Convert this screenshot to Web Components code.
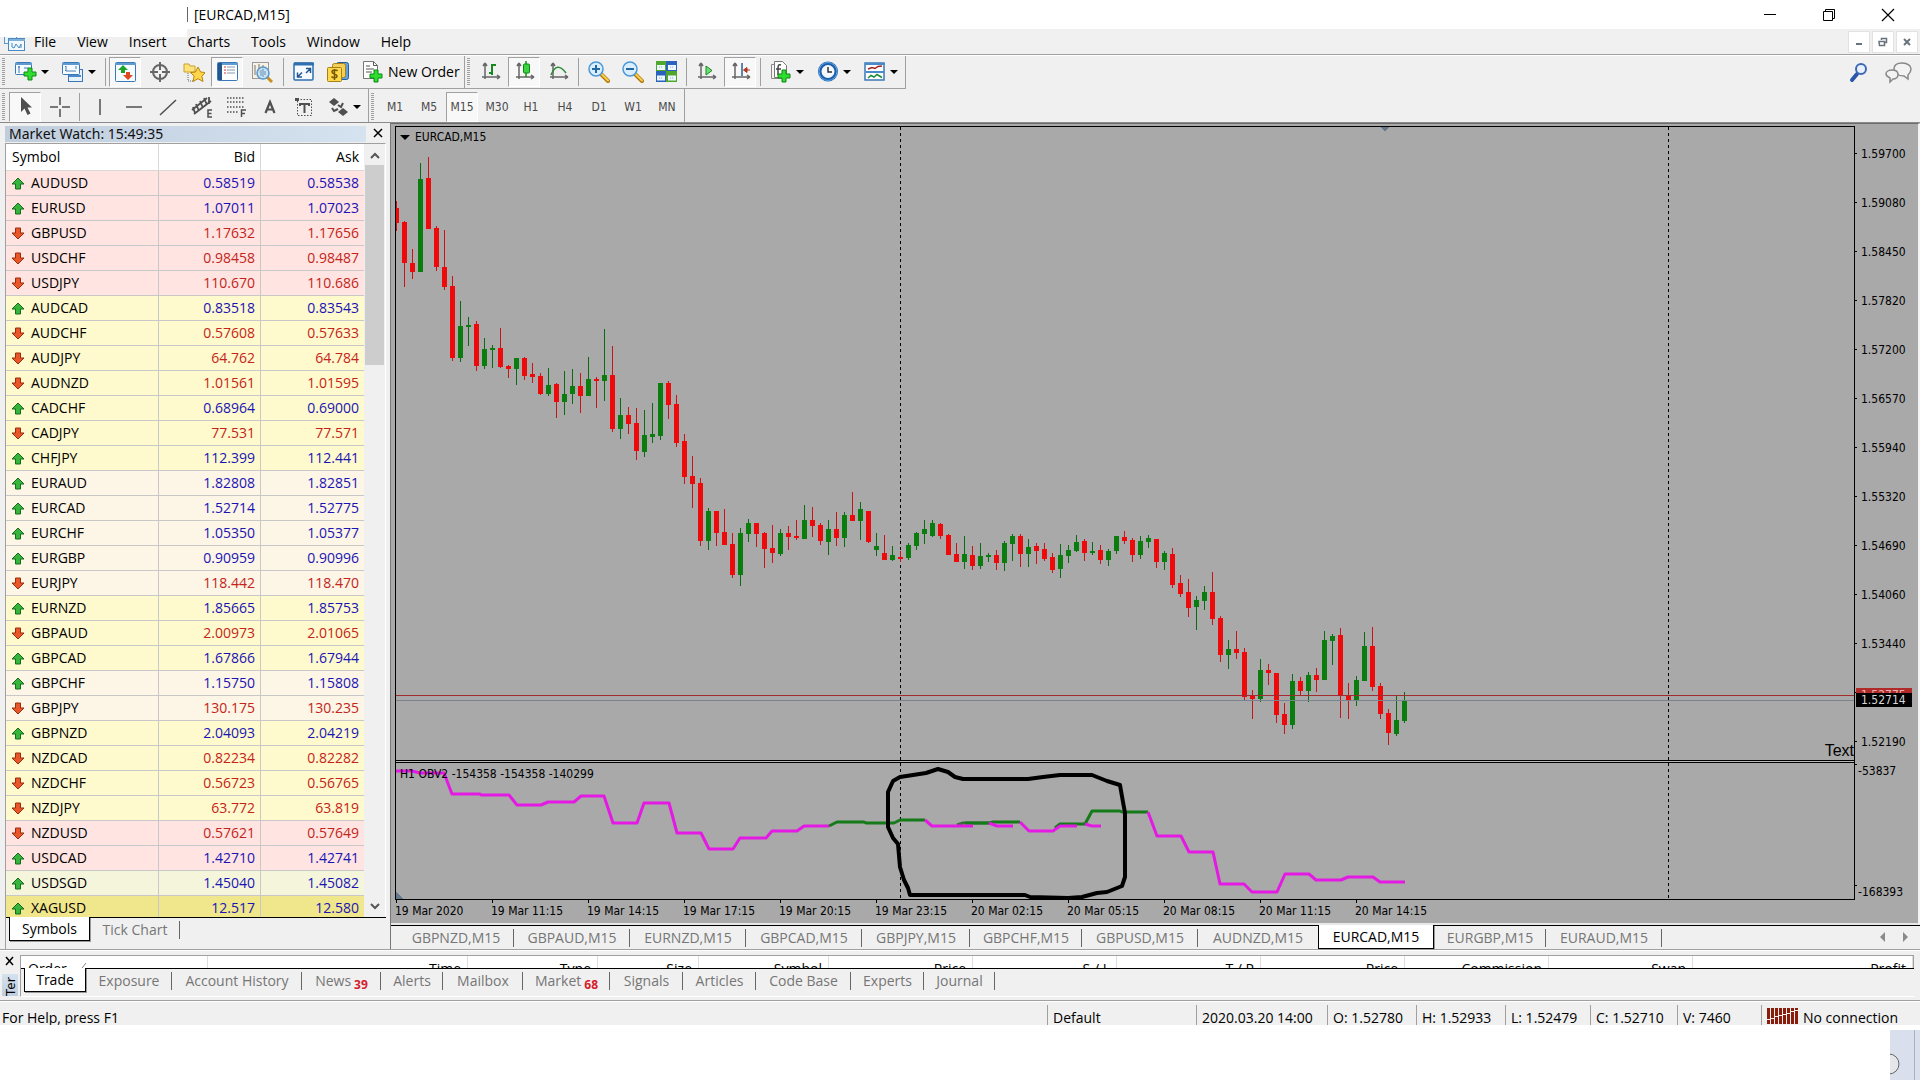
<!DOCTYPE html>
<html lang="en">
<head>
<meta charset="utf-8">
<title>[EURCAD,M15]</title>
<style>
html{height:100%}
body{margin:0;min-height:100%;display:flex;flex-direction:column;background:#fff;color:#000;
font:14px/20px "Open Sans","Noto Sans",sans-serif;
--face:#f0f0f0;--line:#a0a0a0;--chart:#a9a9a9;--small:"DejaVu Sans Condensed","DejaVu Sans",sans-serif}
mt-app{flex:1}
</style>
</head>
<body>
<mt-app></mt-app>
<script>
const G='#4f4f4f';
const axes='<path d="M5 2v16M2 16h18M5 2l-2 3M5 2l2 3M20 16l-3-2M20 16l-3 2" stroke="#666" stroke-width="1.500" fill="none"/>';
const plus=(x,y)=>`<path d="M${x} ${y}h4v4h4v4h-4v4h-4v-4h-4v-4h4z" fill="#2fdc2f" stroke="#0a8a14"/>`;
const win=(x,y,w,h)=>`<rect x="${x}.5" y="${y}.5" width="${w}" height="${h}" rx="1" fill="#f6fbff" stroke="#3a78b8"/><path d="M${x} ${y+2}h${w+1}" stroke="#5f9ad0" stroke-width="2"/>`;
const lens=(s)=>`<path d="M13 13l7 7" stroke="#b07a10" stroke-width="4" stroke-linecap="round"/><path d="M13.500 13l6.500 6.500" stroke="#f8d04a" stroke-width="2" stroke-linecap="round"/><circle cx="8" cy="8" r="7" fill="#d9efff" stroke="#4c97d6" stroke-width="1.500"/>${s}`;
const ICONS={
newchart:win(0,1,16,12)+'<path d="M4 5v7M3 6h2M9 7h4" stroke="#3a78b8"/>'+plus(13,7),
profiles:'<rect x="6.500" y="8.500" width="14" height="12" fill="#e6f1fb" stroke="#3a78b8"/>'+win(0,1,17,12)+'<path d="M4 5v5h10M4 10l-1-1M4 5l-1 1M14 5v3" stroke="#4b7fb4" fill="none"/><path d="M7 15h12" stroke="#4b8ac8" stroke-width="2"/>',
market:win(0,1,20,19)+'<path d="M8 4l5 5h-3v3H6V9H3z" fill="#1ea32a"/><path d="M13 19l-5-5h3v-3h4v3h3z" fill="#e0491c"/>',
target:'<circle cx="11" cy="11" r="7" fill="none" stroke="#666" stroke-width="2"/><path d="M11 1v8M11 13v8M1 11h8M13 11h8" stroke="#666" stroke-width="2"/>',
navigator:'<path d="M1 3h5l1 2h5v6H1z" fill="#ffe27a" stroke="#c9a02a"/><path d="M5 12v8h6" stroke="#666" stroke-dasharray="1 1" fill="none"/><path d="M15 6l2.600 5 5 .6-3.800 3.400 1.200 5.500-5-2.800-5 2.800 1.200-5.500L7.500 11.600l5-.6z" fill="#ffd64a" stroke="#b8860b"/>',
terminal:'<rect x=".5" y="1.500" width="20" height="18" rx="1" fill="#fff" stroke="#3a78b8"/><path d="M1 3h20" stroke="#5f9ad0" stroke-width="2"/><path d="M3 2v17" stroke="#24568e" stroke-width="4"/><path d="M7 6h2M7 9h2M7 12h2" stroke="#d33"/><path d="M10 6h8M10 9h8M10 12h8" stroke="#89a"/>',
tester:'<rect x="1.500" y="1.500" width="16" height="16" fill="#f7f2e4" stroke="#999"/><path d="M4 4v10M8 3v9M12 4v5" stroke="#777"/><path d="M16 16l5 5" stroke="#c89020" stroke-width="3"/><circle cx="12" cy="12" r="6" fill="#bfe0f8" fill-opacity=".85" stroke="#5d97c8" stroke-width="1.500"/><path d="M10 9v6M12 8v8M14 10v4" stroke="#6b8db0"/>',
full:'<rect x="1" y="2" width="19" height="17" rx="1" fill="#f4faff" stroke="#2f6fb0" stroke-width="1.500"/><path d="M1 3h20" stroke="#2f6fb0" stroke-width="3"/><path d="M13 7.500h4.500V12M17 8l-4 4M9 16H4.500v-4.500M5 15.500l4-4" stroke="#24568e" fill="none" stroke-width="1.500"/>',
money:'<rect x="9.500" y="1.500" width="12" height="17" rx="2" fill="#5fa2e0" stroke="#245f9c"/><rect x="5.500" y="2.500" width="13" height="14" rx="2" fill="#f1cf5a" stroke="#a87f12"/><rect x=".5" y="6.500" width="14" height="14" rx="1" fill="#ffd84e" stroke="#a87f12"/><path d="M10.500 10c-1-1.500-5.500-1.500-5.500 1 0 2 5 2 5 4 0 2.500-4.500 2-5.500.5M7.500 8v11" stroke="#7a5a00" fill="none" stroke-width="1.500"/>',
order:'<path d="M1.500.5h10l4 4v13h-14z" fill="#fff" stroke="#777"/><path d="M11.500.5v4h4M4 5h4M4 8h8M4 11h6" stroke="#555" fill="none"/>'+plus(12,9),
bars:axes+'<path d="M12 3v11M12 4h4M9 12h3" stroke="#168a1e" stroke-width="2" fill="none"/>',
candles:axes+'<path d="M12 0v16" stroke="#168a1e" stroke-width="1.500"/><rect x="9.500" y="3" width="6" height="9" rx="1" fill="#3bd33f" stroke="#0b8a14"/>',
linechart:axes+'<path d="M3 14c4-10 9-10 15-2" stroke="#2b8a34" stroke-width="1.500" fill="none"/>',
zin:lens('<path d="M8 4v8M4 8h8" stroke="#24689f" stroke-width="2"/>'),
zout:lens('<path d="M4 8h8" stroke="#24689f" stroke-width="2"/>'),
tile:'<rect x="0" y="0" width="10" height="10" fill="#4ea72c"/><rect x="10" y="0" width="11" height="10" fill="#2b62bd"/><rect x="0" y="10" width="10" height="11" fill="#2b62bd"/><rect x="10" y="10" width="11" height="11" fill="#4ea72c"/><path d="M1 6.500h8M12 6.500h8M1 17h8M12 17h8" stroke="#eef6ff" stroke-width="5"/><path d="M3 6h4M14 6h4M3 17h4M14 17h4" stroke="#8ab" stroke-dasharray="1 1"/>',
scroll:axes+'<path d="M10 5v9l6-4.500z" fill="#6fe072" stroke="#168a1e"/>',
shift:axes+'<path d="M12 2v13" stroke="#2a5d9a" stroke-width="1.500"/><path d="M20 9h-5M17 6.500l-3.500 2.500 3.500 2.500z" stroke="#b0381c" fill="#b0381c"/>',
indic:'<path d="M1.500 3.500h10l-0 14h-10z" fill="#f4f4f4" stroke="#888"/><path d="M4.500.5h8l4 4v12h-12z" fill="#fff" stroke="#777"/><path d="M11 4c-3-1-3 1-3 4v6M6 8h5" stroke="#444" fill="none" stroke-width="1.500"/>'+plus(12,9),
clock:'<circle cx="11" cy="10.500" r="10" fill="#1d5fae"/><circle cx="11" cy="10.500" r="9" fill="none" stroke="#5fa8e6"/><circle cx="11" cy="10.500" r="6.500" fill="#f4f8fc"/><path d="M11 6v5h4" stroke="#333" fill="none" stroke-width="1.500"/>',
templ:'<rect x="1" y="2" width="19" height="17" fill="#fff" stroke="#3a78b8" stroke-width="1.500"/><path d="M1 3h20M2 11h18" stroke="#4b8ac8" stroke-width="2"/><path d="M4 8l4-1.500 3 1 3-2 4-.5" stroke="#a02020" fill="none" stroke-width="1.500"/><path d="M4 17l3-2.500 3 1.500 3-2.500 5 3" stroke="#1c8a3a" fill="none" stroke-width="1.500"/>',
cursor:`<path d="M6 1v15l3.500-3.500L12.500 19l3-1.500-3-6H17z" fill="${G}"/>`,
cross:`<path d="M11 1v8M11 13v8M1 11h8M13 11h8" stroke="${G}" stroke-width="1.500"/>`,
vline:`<path d="M11 3v16" stroke="${G}" stroke-width="1.500"/>`,
hline:`<path d="M3 11h16" stroke="${G}" stroke-width="1.500"/>`,
trend:`<path d="M3 19L19 4" stroke="${G}" stroke-width="1.500"/>`,
chan:`<path d="M1 14L16 2M3 18L20 5M5 8l3 7M9 5l3 7M13 2l3 7M2 11l2 6M18 1v7" stroke="${G}" stroke-width="1.800"/><path d="M21 14h-4v7h4M17 17.500h3.500" stroke="${G}" fill="none" stroke-width="1.500"/>`,
fibo:`<path d="M2 2h18M2 6h18M2 11h18M2 16h11" stroke="${G}" stroke-width="1.500" stroke-dasharray="1.500 1.500"/><path d="M16.500 21v-7H21M16.500 17.500H20" stroke="${G}" fill="none" stroke-width="1.500"/>`,
text:`<path d="M6.500 17L11 6l4.500 11M8 13.500h6" stroke="${G}" stroke-width="2.200" fill="none"/>`,
label:`<rect x="4.500" y="3.500" width="14" height="16" fill="none" stroke="${G}" stroke-dasharray="1.500 1.500"/><path d="M2 2h4v3H2z" fill="${G}"/><path d="M7 8h9M11.500 8v9M7 7v3M16 7v3" stroke="${G}" stroke-width="2"/>`,
arrows:`<path d="M7 2l5 4-5 4-5-4zM16 12l5 4-5 4-5-4z" fill="${G}"/><path d="M5 12l2 3 4-2M11 9l3 2 2-4" stroke="${G}" fill="none" stroke-width="2"/>`,
mdi:'<rect x=".5" y="-2.500" width="12" height="10" fill="#eaf4ff" stroke="#5b97c9"/><rect x="4.500" y="2.500" width="16" height="12" fill="#f2f9ff" stroke="#4a88c0"/><path d="M5 4h16" stroke="#7fb0d8" stroke-width="2"/><path d="M8 7v4l2 1 2-4 3 4 2-4v4" stroke="#4a88c0" fill="none"/>',
search:'<path d="M3 18l5-6" stroke="#2a56a8" stroke-width="4" stroke-linecap="round"/><circle cx="12" cy="7" r="5" fill="#e9f0fa" stroke="#3d68b5" stroke-width="2"/>',
chat:'<path d="M18 1c6 0 9 3 9 6 0 3-2 5-3 6v4l-4-3c-6 0-10-3-10-7s3-6 8-6z" fill="#f3f3f3" stroke="#888" stroke-width="1.500"/><path d="M8 8c4 0 6 2 6 4.500s-2 4.500-5 4.500l-3 3v-4c-2-1-4-2-4-4 0-2.500 3-4 6-4z" fill="#f3f3f3" stroke="#888" stroke-width="1.500"/>'
};
const svg=(n,w=22,h=22)=>`<svg width="${w}" height="${h}" viewBox="0 0 ${w} ${h}" aria-hidden="true">${ICONS[n]}</svg>`;
const RESET='*{box-sizing:border-box}button{font:inherit;color:inherit;background:none;border:0;margin:0;padding:0}svg{display:block}';
function define(name,render){
  customElements.define(name,class extends HTMLElement{
    connectedCallback(){
      if(this.shadowRoot)return;
      const [css,html]=render(this);
      this.attachShadow({mode:'open'}).innerHTML=`<style>${RESET}${css}</style>${html}`;
    }
  });
}

define('mt-tool',el=>[`
:host{display:block;width:34px;flex:none}
:host([drop]){width:47px}
:host([wide]){width:109px}
button{width:100%;height:30px;display:flex;align-items:center;border:1px solid transparent;padding-left:5px}
:host([pressed]) button{width:32px;background:#f8f8f8;border-color:var(--line) #fff #fff var(--line)}
:host([frame]) button{padding:0;justify-content:center;font:12px/16px var(--small);color:#4a4a4a}
i{border:4px solid transparent;border-top-color:#000;border-bottom:0;margin-left:4px}
span{margin-left:4px;white-space:nowrap}
:host([wide]) button{padding-left:6px}`,
`<button aria-label="${el.getAttribute('icon')||el.textContent}">${el.hasAttribute('icon')?svg(el.getAttribute('icon')):''}${el.hasAttribute('wide')?'<span><slot></slot></span>':el.hasAttribute('frame')?'<slot></slot>':''}${el.hasAttribute('drop')?'<i></i>':''}</button>`]);

define('mt-sep',()=>[`:host{display:block;width:6px;padding-left:2px;box-sizing:border-box;flex:none}:host([wide]){width:8px;padding-left:4px}div{width:1px;height:28px;background:var(--line)}`,'<div></div>']);
define('mt-grip',()=>[`:host{display:block;width:9px;padding-left:2px;box-sizing:border-box;flex:none}div{width:3px;height:28px;background:repeating-linear-gradient(#a0a0a0 0 1px,#f0f0f0 1px 2px)}`,'<div></div>']);
define('mt-bar',()=>[`:host{display:flex;height:33px;box-sizing:border-box;border-right:1px solid var(--line);border-bottom:1px solid var(--line);align-items:center;flex:none}`,'<slot></slot>']);

define('mt-menu',()=>[`
:host{display:flex;height:26px;box-sizing:border-box;background:var(--face);border-bottom:1px solid var(--line);position:relative;align-items:center}
nav{display:flex;gap:21px;margin-left:9px;flex:1}
.ico{margin:5px 0 0 4px}
.ico svg{overflow:visible}
.mask{position:absolute;left:0;top:0;width:187px;height:8px;background:#fff}
.w{display:flex;gap:2px;padding-right:2px}
.w button{width:22px;height:22px;background:#fff;border:1px solid #e2e2e2;display:grid;place-items:center}`,
`<div class="ico">${svg('mdi',21,16)}</div><nav>${['File','View','Insert','Charts','Tools','Window','Help'].map(t=>`<button>${t}</button>`).join('')}</nav>
<div class="w"><button aria-label="Minimize chart"><svg width="10" height="10"><path d="M2 7h6" stroke="#6a737c" stroke-width="2"/></svg></button><button aria-label="Restore chart"><svg width="10" height="10"><path d="M3.500 3V1.500h5v4H7M1 4.500h5.500v4h-5z" fill="none" stroke="#6a737c" stroke-width="1.500"/></svg></button><button aria-label="Close chart"><svg width="10" height="10"><path d="M2 2l6 6M8 2L2 8" stroke="#6a737c" stroke-width="2"/></svg></button></div><div class="mask"></div>`]);

define('mt-title',()=>[`
:host{display:flex;height:29px;background:#fff;align-items:center}
b{width:1px;height:15px;background:#666;margin:0 6px 0 187px}
span{flex:1}
.w{display:flex;padding-right:3px}
.w button{width:59px;height:28px;display:grid;place-items:center}`,
`<b></b><span>[EURCAD,M15]</span><div class="w"><button aria-label="Minimize"><svg width="14" height="14"><path d="M1 6.500h12" stroke="#000"/></svg></button><button aria-label="Restore"><svg width="14" height="14"><path d="M3.500 3V1.500h9v9H11M1.500 3.500h9v9h-9z" fill="none" stroke="#000"/></svg></button><button aria-label="Close"><svg width="14" height="14"><path d="M1 1l12 12M13 1L1 13" stroke="#000" stroke-width="1.200"/></svg></button></div>`]);

define('mt-toolbars',()=>{
const t=(n,a='')=>`<mt-tool icon="${n}" ${a}></mt-tool>`;
return [`
:host{display:block;background:var(--face);border-top:1px solid #fff;border-bottom:1px solid #8a8a8a}
.r{display:flex}
.end{margin-left:auto;display:flex;align-items:center;gap:13px;padding-right:8px}
.two mt-bar{border-bottom:0;padding-top:2px}`,
`<div class="r"><mt-bar><mt-grip></mt-grip>${t('newchart','drop')}${t('profiles','drop')}<mt-sep></mt-sep>${t('market','pressed')}${t('target')}${t('navigator')}${t('terminal','pressed')}${t('tester')}<mt-sep wide></mt-sep>${t('full')}${t('money')}<mt-tool icon="order" wide>New Order</mt-tool></mt-bar>
<mt-bar><mt-grip></mt-grip>${t('bars')}${t('candles','pressed')}${t('linechart')}<mt-sep></mt-sep>${t('zin')}${t('zout')}${t('tile')}<mt-sep></mt-sep>${t('scroll')}${t('shift','pressed')}<mt-sep></mt-sep>${t('indic','drop')}${t('clock','drop')}${t('templ','drop')}</mt-bar>
<div class="end"><button aria-label="Search">${svg('search')}</button><button aria-label="Chat">${svg('chat',28,22)}</button></div></div>
<div class="r two"><mt-bar><mt-grip></mt-grip>${t('cursor','pressed')}${t('cross')}${['vline','hline','trend','chan','fibo','text','label'].map((n,i)=>(i?'':'<mt-sep></mt-sep>')+t(n)).join('')}${t('arrows','drop')}</mt-bar><mt-bar><mt-grip></mt-grip>${['M1','M5','M15','M30','H1','H4','D1','W1','MN'].map(n=>`<mt-tool frame ${n=='M15'?'pressed':''}>${n}</mt-tool>`).join('')}</mt-bar></div>`];});

define('mt-tabs',el=>{
const items=el.getAttribute('items').split('|').map(s=>s.split(':'));
const act=+el.getAttribute('active');
return [`
:host{display:flex;height:24px;box-sizing:border-box;color:#767676}
:host::before{content:"";width:var(--lead,3px);border-top:1px solid #000}
button{flex:none;height:24px;border-top:1px solid #000;display:flex;align-items:center;justify-content:center;position:relative;white-space:nowrap}
button::after{content:"";position:absolute;right:0;top:3px;height:18px;width:1px;background:#666}
button.a{background:#fff;color:#000;border:1px solid #000;border-top:0;box-shadow:1px 1px #999}
button.a::after,button.b::after{display:none}
sub{font:bold 12px/14px "Open Sans",sans-serif;color:#d3202c;margin:8px 0 0 3px}
div{flex:1;border-top:1px solid #000;display:flex;justify-content:flex-end;gap:18px;padding:6px 12px 0}
u{border:5px solid transparent;border-right:5px solid #8a8a8a;border-left:0;height:10px}
u+u{border-left:5px solid #8a8a8a;border-right:0}`,
items.map(([n,w,s],i)=>`<button class="${i==act?'a':i==act-1?'b':''}" style="width:${w}px">${n}${s?`<sub>${s}</sub>`:''}</button>`).join('')+`<div>${el.hasAttribute('nav')?'<u></u><u></u>':''}</div>`];});

const QUOTES=`u p AUDUSD 0.58519 0.58538
u p EURUSD 1.07011 1.07023
d p GBPUSD 1.17632 1.17656
d p USDCHF 0.98458 0.98487
d p USDJPY 110.670 110.686
u y AUDCAD 0.83518 0.83543
d y AUDCHF 0.57608 0.57633
d y AUDJPY 64.762 64.784
d y AUDNZD 1.01561 1.01595
u y CADCHF 0.68964 0.69000
d y CADJPY 77.531 77.571
u y CHFJPY 112.399 112.441
u o EURAUD 1.82808 1.82851
u o EURCAD 1.52714 1.52775
u o EURCHF 1.05350 1.05377
u o EURGBP 0.90959 0.90996
d o EURJPY 118.442 118.470
u y EURNZD 1.85665 1.85753
d y GBPAUD 2.00973 2.01065
u y GBPCAD 1.67866 1.67944
u o GBPCHF 1.15750 1.15808
d o GBPJPY 130.175 130.235
u y GBPNZD 2.04093 2.04219
d y NZDCAD 0.82234 0.82282
d y NZDCHF 0.56723 0.56765
d y NZDJPY 63.772 63.819
d p NZDUSD 0.57621 0.57649
u p USDCAD 1.42710 1.42741
u b USDSGD 1.45040 1.45082
u k XAGUSD 12.517 12.580`.split('\n').map(r=>r.split(' '));
const ARROW={u:'<path d="M7 1l6 6H9.500v5h-5V7H1z" fill="#35b53c" stroke="#156b1c"/>',d:'<path d="M7 12L1 6h3.500V1h5v5H13z" fill="#e8562a" stroke="#9a2c0c"/>'};

define('mt-market',()=>[`
:host{display:flex;flex-direction:column;box-sizing:border-box;width:391px;flex:none;background:var(--face);border-right:1px solid #777;padding:3px 4px 0 5px}
header{display:flex;height:17px;align-items:flex-start;font:14px/16px "Noto Sans",sans-serif;color:#101010}
header span{flex:1;margin-right:5px;height:16px;padding-left:4px;background:linear-gradient(90deg,#bfcddd,#d5e2f0)}
header button{width:14px;height:14px;margin-right:1px}
.list{flex:1;contain:size;display:flex;overflow:hidden;border:1px solid var(--line);border-bottom:0;border-right-color:#fff;background:#fff}
table{flex:none;width:358px;border-collapse:separate;border-spacing:0;table-layout:fixed;align-self:flex-start}
th,td{padding:0 5px 0 0;text-align:right;font-weight:400;border-right:1px solid #c8c8c8;border-bottom:1px solid #c8c8c8;height:25px;line-height:22px}
th{height:27px;border-color:#d8d8d8}
th:first-child,td:first-child{text-align:left;padding-left:6px}
td:first-child svg{display:inline-block;vertical-align:-2px;margin:0 6px 0 -1px}
th:last-child,td:last-child{border-right:0}
.p{background:#ffe4e1}.y{background:#fffacd}.o{background:#fdf5e6}.b{background:#f5f5dc}.k{background:#f0e68c}
.u td+td{color:#1a14b4}.d td+td{color:#c4241a}
.bar{flex:1;background:#f0f0f0;display:flex;flex-direction:column;align-items:center}
.bar svg{flex:none}
.thumb{width:19px;height:200px;background:#cdcdcd;margin-bottom:auto}
mt-tabs{height:32px;border-left:1px solid var(--line)}
`,
`<header><span>Market Watch: 15:49:35</span><button aria-label="Close Market Watch"><svg width="14" height="14"><path d="M3 3l8 8M11 3l-8 8" stroke="#000" stroke-width="1.500"/></svg></button></header>
<div class="list"><table><colgroup><col style="width:153px"><col style="width:102px"><col></colgroup><thead><tr><th>Symbol</th><th>Bid</th><th>Ask</th></tr></thead><tbody>${QUOTES.map(([d,c,s,b,a])=>`<tr class="${d} ${c}"><td><svg width="14" height="13">${ARROW[d]}</svg>${s}</td><td>${b}</td><td>${a}</td></tr>`).join('')}</tbody></table>
<div class="bar"><svg width="12" height="21"><path d="M2 14l4-4 4 4" fill="none" stroke="#555" stroke-width="2"/></svg><div class="thumb"></div><svg width="12" height="21"><path d="M2 8l4 4 4-4" fill="none" stroke="#555" stroke-width="2"/></svg></div></div>
<mt-tabs items="Symbols:81|Tick Chart:90" active="0"></mt-tabs>`]);

/* one candle per entry: direction, high, body top, body bottom, low */
const CANDLES=`d201,208,223,231 d221,222,263,287 d249,263,272,279 u163,179,272,272 d157,178,229,229 d226,228,267,271 d230,267,287,290 d276,286,358,361 u301,326,358,362 u317,325,327,346
d321,324,366,371 u338,349,366,369 u345,348,350,368 d328,348,367,368 d365,366,369,378 u358,358,369,385 d357,358,376,380 d363,374,377,383 d373,376,394,395 u368,385,394,396
d383,384,402,418 u371,394,402,415 u369,386,394,404 d373,386,396,413 u357,379,396,396 d377,379,381,408 u329,375,381,401 d346,375,429,432 u398,415,429,439 d407,415,424,434
d408,423,451,460 u410,435,452,457 u403,434,437,443 u383,383,436,440 d381,383,405,419 d395,404,443,447 d434,441,477,484 d456,476,484,508 d478,483,541,546 u508,511,541,550
d511,511,533,546 d509,532,545,545 d533,544,575,578 u528,533,575,586 u519,523,534,542 d523,523,534,547 d532,533,549,568 d525,548,553,563 u529,533,554,556 d526,533,537,550
d520,536,538,540 u505,520,539,539 d507,520,526,537 d523,525,541,545 u520,529,542,555 d512,529,538,546 u512,515,538,547 d492,515,521,521 u502,509,521,540 d511,511,542,543
u533,546,550,556 d535,553,560,560 u546,555,560,561 d551,557,559,562 u543,545,558,560 u532,533,546,550 u520,529,534,544 u520,523,536,537 d523,524,536,539 d534,535,555,555
d543,554,562,562 u536,554,562,569 d546,555,566,570 u543,556,566,569 u553,555,557,562 d550,555,563,570 u541,543,563,571 u534,536,544,561 d534,536,554,567 u539,547,554,567
d543,546,551,564 d543,549,559,561 d553,557,570,573 u544,555,569,578 u545,550,556,563 u535,542,551,552 d539,541,553,561 u542,551,553,555 d545,550,560,564 u549,551,560,566
u536,536,551,554 d531,537,541,544 d538,540,555,562 u536,541,555,559 u535,538,542,548 d539,539,562,568 u551,553,562,570 d548,554,585,588 d575,583,594,597 d579,592,608,617
u596,600,607,630 u586,592,601,610 d572,592,619,625 d616,618,655,662 u640,649,655,669 d631,649,653,659 d648,652,697,701 d690,695,699,719 u659,670,699,702 d664,670,673,685
d673,673,715,723 d703,714,725,734 u674,681,725,729 d677,681,691,696 u672,675,691,702 d668,675,680,692 u631,640,680,680 u634,636,641,665 d628,635,696,718 d683,695,701,719
u676,680,700,706 u632,646,681,681 d627,646,687,691 d683,686,714,719 d709,713,733,745 u696,720,734,736 u692,700,721,723`.split(/\s+/);
const candleShapes=CANDLES.map((c,k)=>{
  const [h,t,b,l]=c.slice(1).split(',').map(Number),up=c[0]=='u',x=396+8*k;
  return `<rect x="${x}" y="${h}" width="1" height="${Math.max(1,l-h)}" fill="${up?'#0b6b12':'#c81418'}"/><rect x="${x-2}" y="${t}" width="5" height="${Math.max(1,b-t)}" fill="${up?'#0a7d0e':'#ee0a0a'}"/>`;
}).join('');
const line=(c,p)=>`<polyline points="${p}" fill="none" stroke="${c}" stroke-width="3" stroke-linejoin="round"/>`;
const M='#e41ae4',GR='#157a18';
const PRICES=['1.59700','1.59080','1.58450','1.57820','1.57200','1.56570','1.55940','1.55320','1.54690','1.54060','1.53440','','1.52190'];
const TIMES=['19 Mar 2020','19 Mar 11:15','19 Mar 14:15','19 Mar 17:15','19 Mar 20:15','19 Mar 23:15','20 Mar 02:15','20 Mar 05:15','20 Mar 08:15','20 Mar 11:15','20 Mar 14:15'];

define('mt-chart',()=>[`
:host{display:grid;grid-template-columns:1fr 63px;grid-template-rows:774px 23px;background:var(--chart);border-top:1px solid #6c6c6c;border-right:2px solid #f4f4f4;padding:2px 0 0 4px;font:12px/16px var(--small);border-bottom:2px solid #e8e8e8}
.plot{border:1px solid #000;position:relative;overflow:hidden;min-width:0}
.over{position:absolute;white-space:nowrap}
.name{left:4px;top:2px;display:flex;align-items:center;gap:5px}
.name i{border:5px solid transparent;border-top:5px solid #000;border-bottom:0}
.obv{left:4px;top:639px}
.note{right:0;top:614px;font:16px/20px "Liberation Sans",sans-serif}
.axis{display:flex;flex-direction:column;position:relative}
.prices{height:637px;padding-top:4px;overflow:hidden}
.prices div,.ind div{padding-left:6px;position:relative}
.prices div{height:49px;line-height:49px}
.prices div::before,.ind div::before{content:"";position:absolute;left:0;top:23px;width:2px;height:1px;background:#000}
.ind{flex:1;display:flex;flex-direction:column;justify-content:space-between}
.ind div{padding-left:3px}
.ind div::before{top:1px}
.tag{left:1px;width:56px;padding-left:5px;height:14px;line-height:15px;color:#d8d8d8;background:#000;top:567px}
.ask{background:#b02a2a;top:562px;color:#e8b0b0}
.times{display:flex;grid-column:1/3}
.times div{width:96px;flex:none;white-space:nowrap;padding-top:3px;background:linear-gradient(#000,#000) 1px 0/1px 3px no-repeat}`,
`<div class="plot"><svg width="100%" height="772" shape-rendering="crispEdges">
<path d="M984 0h10l-5 4z" fill="#66788c"/>
<path d="M0 765l7 7H0z" fill="#66788c"/>
<g transform="translate(-396,-127)">
<path d="M900.500 127V899M1668.500 127V899" stroke="#000" stroke-dasharray="3 3"/>
${candleShapes}</g>
<rect y="568" width="100%" height="1" fill="#a02c30"/><rect y="573" width="100%" height="1" fill="#7a8490"/>
<rect y="633" width="100%" height="3" fill="#000"/><rect y="634" width="100%" height="1" fill="#b8b8b8"/>
<g transform="translate(-396,-127)" shape-rendering="auto">
${line(GR,'829,826 837,822 864,822 866,823 894,823 900,820 925,820')}
${line('#3f6a40','957,825 963,823 989,823')}
${line(GR,'965,823 989,823 993,822 1020,822')}
${line(GR,'1055,828 1060,824 1085,824 1092,811 1120,811 1122,812 1148,812')}
${line(M,'396,771 412,771 420,773 444,773 452,794 480,794 481,795 509,795 517,805 541,805 548,802 574,802 581,796 604,796 613,823 637,823 644,803 669,803 677,833 701,833 709,849 733,849 740,838 766,838 772,831 797,831 804,826 829,826')}
${line(M,'925,820 932,826 973,826')}
${line(M,'989,823 997,826 1013,826')}
${line(M,'1020,822 1029,831 1053,831 1060,826 1077,826')}
${line(M,'1085,824 1092,826 1101,826')}
${line(M,'1148,812 1157,836 1181,836 1189,852 1213,852 1220,884 1244,884 1252,892 1277,892 1285,874 1309,874 1316,880 1341,880 1348,877 1373,877 1380,882 1405,882')}
<path d="M963 779L955 777 948 772 938 769 926 773 900 777 893 781 888 792V827L893 838 898 844 900 867 904 880 908 888 910 895H1025L1030 897 1068 898 1082 897 1097 893 1107 892 1122 886 1125 877V813L1123 802 1120 785 1107 781 1092 775H1060L1043 777 1028 779Z" fill="none" stroke="#000" stroke-width="4" stroke-linejoin="round"/>
</g></svg>
<div class="over name"><i></i>EURCAD,M15</div><div class="over obv">H1 OBV2 -154358 -154358 -140299</div><div class="over note">Text</div></div>
<div class="axis"><div class="prices">${PRICES.map(p=>`<div>${p}</div>`).join('')}</div><div class="ind"><div>-53837</div><div>-168393</div></div><div class="over tag ask">1.52775</div><div class="over tag">1.52714</div></div>
<div class="times">${TIMES.map(t=>`<div>${t}</div>`).join('')}</div>`]);

const COLS=[['Time',260],['Type',130],['Size',101],['Symbol',130],['Price',144],['S / L',144],['T / P',144],['Price',144],['Commission',144],['Swap',144]];
define('mt-terminal',()=>[`
:host{display:flex;height:50px;box-sizing:border-box;background:var(--face);border-top:1px solid #fff}
.side{width:20px;flex:none;display:flex;flex-direction:column;align-items:center;padding-top:5px;gap:8px}
.side svg{flex:none}
.cap{width:16px;height:22px;background:linear-gradient(#d5e2f0,#bfcddd)}
.cap span{display:block;writing-mode:vertical-rl;transform:rotate(180deg);font:13px/16px "Noto Sans",sans-serif;height:22px}
.main{flex:1;display:flex;flex-direction:column;margin:4px 6px 0 0;min-width:0}
.head{height:13px;overflow:hidden;border:1px solid var(--line);border-bottom:0;background:#fff}
table{width:100%;border-spacing:0;table-layout:fixed}
th{font-weight:400;text-align:right;vertical-align:top;padding:3px 6px 0 0;border-right:1px solid #ddd;height:26px;line-height:20px;white-space:nowrap}
th:first-child{text-align:left;padding-left:7px}
th svg{display:inline-block;margin-left:14px;vertical-align:5px}
mt-tabs{height:29px;border-left:1px solid var(--line);border-bottom:1px solid #fff}`,
`<div class="side"><svg width="10" height="10"><path d="M1 1l7 8M8 1L1 9" stroke="#000" stroke-width="1.500"/></svg><div class="cap"><span>Ter</span></div></div>
<div class="main"><div class="head"><table><thead><tr><th style="width:187px">Order<svg width="6" height="6"><path d="M5 0L1 5" stroke="#888"/></svg></th>${COLS.map(([n,w])=>`<th style="width:${w}px">${n}</th>`).join('')}<th>Profit</th></tr></thead></table></div>
<mt-tabs items="Trade:62|Exposure:86|Account History:130|News:79:39|Alerts:62|Mailbox:80|Market:87:68|Signals:73|Articles:73|Code Base:95|Experts:73|Journal:71" active="0"></mt-tabs></div>`]);

define('mt-status',()=>[`
:host{display:flex;height:25px;box-sizing:border-box;background:var(--face);border-top:1px solid var(--line);overflow:hidden;padding-top:4px;box-shadow:inset 0 1px #fff}
div{flex:none;border-left:1px solid var(--line);padding-left:5px;line-height:26px;height:26px;white-space:nowrap;display:flex}
div:first-of-type{flex:1;border:0;padding-left:2px}
svg{margin:3px 5px 0 0}`,
`<div>For Help, press F1</div><div style="width:149px">Default</div><div style="width:131px">2020.03.20 14:00</div><div style="width:89px">O: 1.52780</div><div style="width:89px">H: 1.52933</div><div style="width:85px">L: 1.52479</div><div style="width:87px">C: 1.52710</div><div style="width:84px">V: 7460</div><div style="width:159px"><svg width="31" height="16">${[0,1,2,3,4,5,6,7].map(i=>`<rect x="${i*4}" width="3" height="16" fill="#8a1c0c"/><rect x="${i*4}" y="${Math.round(11-i*1.3)}" width="3" height="1" fill="#f0f0f0"/>`).join('')}</svg>No connection</div>`]);

define('mt-app',()=>[`
:host{display:flex;flex-direction:column}
.work{display:flex;background:var(--face)}
.right{flex:1;min-width:0;display:flex;flex-direction:column}
.right mt-tabs{--lead:7px}
.gap{height:1px;background:var(--line)}
footer{flex:1;display:flex;justify-content:flex-end;padding-top:5px}
footer svg{background:#d9dfec}`,
`<mt-title></mt-title><mt-menu></mt-menu><mt-toolbars></mt-toolbars>
<div class="work"><mt-market></mt-market><div class="right"><mt-chart></mt-chart><mt-tabs nav active="8" items="GBPNZD,M15:116|GBPAUD,M15:116|EURNZD,M15:116|GBPCAD,M15:116|GBPJPY,M15:108|GBPCHF,M15:112|GBPUSD,M15:116|AUDNZD,M15:120|EURCAD,M15:116|EURGBP,M15:112|EURAUD,M15:116"></mt-tabs></div></div>
<div class="gap"></div><mt-terminal></mt-terminal><mt-status></mt-status>
<footer><svg width="30" height="50"><path d="M24.500 0v50" stroke="#aab3c4"/><circle cx="-1" cy="34" r="10" fill="#e4e6ea" stroke="#666"/></svg></footer>`]);
</script>
</body>
</html>
